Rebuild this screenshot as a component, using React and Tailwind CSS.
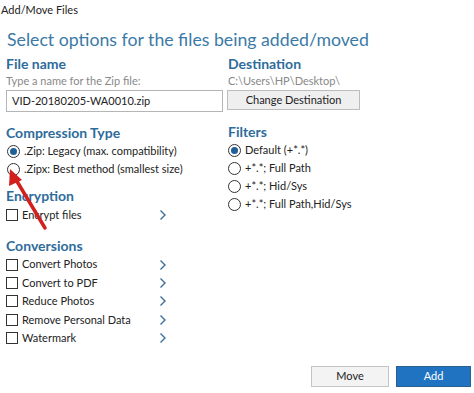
import React from 'react';

const font = { fontFamily: 'Lato, "Open Sans", sans-serif' };

function Radio({ checked, label }) {
    return (
        <label className="flex items-center gap-[4px] h-[18px] text-[11px] text-[#222]">
            <span className="w-[13px] h-[13px] rounded-full border border-[#333] bg-white flex items-center justify-center">
                {checked && <span className="w-[7px] h-[7px] rounded-full bg-[#1f5f9a]"></span>}
            </span>
            {label}
        </label>
    );
}

function Check({ label }) {
    return (
        <div className="flex items-center h-[18.4px] text-[11px] text-[#222]">
            <span className="w-[12px] h-[12px] border border-[#333] bg-white mr-[4px]"></span>
            <span className="w-[137px]">{label}</span>
            <svg width="8" height="12" viewBox="0 0 8 12" className="text-[#3c6e9a]">
                <path d="M1.5 1.5 L6 6 L1.5 10.5" fill="none" stroke="currentColor" strokeWidth="1.4" />
            </svg>
        </div>
    );
}

function SectionTitle({ children, className = '' }) {
    return <h3 className={`text-[14px] font-bold text-[#2e6c9b] leading-[18px] ${className}`}>{children}</h3>;
}

export default function App() {
    return (
        <div className="relative w-[474px] h-[393px] bg-white overflow-hidden" style={font}>
            <div className="text-[11px] text-[#222] pl-[1px] pt-[2px] leading-[15px]">Add/Move Files</div>

            <h1 className="text-[17.7px] text-[#3b7aa6] pl-[7px] mt-[11px] leading-[24px]">
                Select options for the files being added/moved
            </h1>

            <div className="flex mt-[3px]">
                {/* left column */}
                <div className="w-[228px] pl-[6px]">
                    <SectionTitle>File name</SectionTitle>
                    <div className="text-[11px] text-[#888] leading-[14px] mt-[1px]">Type a name for the Zip file:</div>
                    <div className="mt-[2px] w-[217px] h-[22px] border border-[#b5b5b5] flex items-center px-[5px] text-[11px] text-[#222]">
                        VID-20180205-WA0010.zip
                    </div>

                    <SectionTitle className="mt-[12px]">Compression Type</SectionTitle>
                    <div className="pl-[1px]">
                        <Radio checked label=".Zip: Legacy (max. compatibility)" />
                        <Radio label=".Zipx: Best method (smallest size)" />
                    </div>

                    <SectionTitle className="mt-[9px]">Encryption</SectionTitle>
                    <div className="mt-[1px]">
                        <Check label="Encrypt files" />
                    </div>

                    <SectionTitle className="mt-[13px]">Conversions</SectionTitle>
                    <div>
                        <Check label="Convert Photos" />
                        <Check label="Convert to PDF" />
                        <Check label="Reduce Photos" />
                        <Check label="Remove Personal Data" />
                        <Check label="Watermark" />
                    </div>
                </div>

                {/* right column */}
                <div className="flex-1 flex flex-col items-start">
                    <SectionTitle>Destination</SectionTitle>
                    <div className="text-[11px] text-[#888] leading-[14px] mt-[1px]">C:\Users\HP\Desktop\</div>
                    <button className="mt-[2px] -ml-[1px] w-[133px] h-[20px] border border-[#bcbcbc] bg-[#efefef] text-[11px] text-[#222]">
                        Change Destination
                    </button>

                    <SectionTitle className="mt-[13px]">Filters</SectionTitle>
                    <Radio checked label="Default (+*.*)" />
                    <Radio label="+*.*; Full Path" />
                    <Radio label="+*.*; Hid/Sys" />
                    <Radio label="+*.*; Full Path,Hid/Sys" />
                </div>
            </div>

            <div className="absolute bottom-[6px] right-[3px] flex gap-[7px]">
                <button className="w-[78px] h-[21px] border border-[#c4c4c4] bg-[#f3f3f3] text-[11px] text-[#222]">Move</button>
                <button className="w-[75px] h-[21px] border border-[#2a5f8f] bg-[#1f73c0] text-[11px] text-white">Add</button>
            </div>

            {/* red annotation arrow */}
            <svg className="absolute left-0 top-0 pointer-events-none" width="474" height="393">
                <line x1="45" y1="228" x2="15" y2="178" stroke="#d3201e" strokeWidth="3.5" strokeLinecap="round" />
                <polygon points="10,169 9,186 22,180" fill="#d3201e" />
            </svg>
        </div>
    );
}
